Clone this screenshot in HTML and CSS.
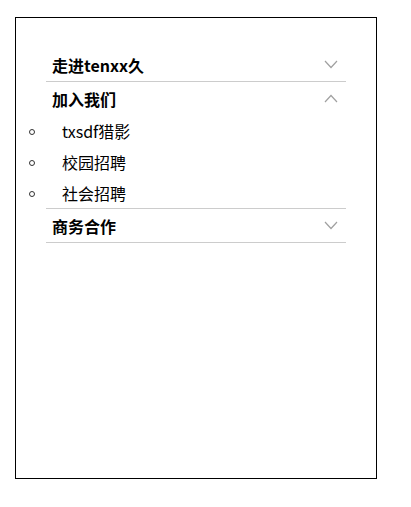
FILE: index.html
```html
<!DOCTYPE html>
<html lang="zh-CN">
<head>
    <meta charset="UTF-8">
    <meta name="viewport" content="width=device-width, initial-scale=1.0">
    <title>手风琴菜单</title>
    <link rel="stylesheet" href="styles.css">
</head>
<body>
    <!-- 外框 -->
    <div class="caja">
        <div class="menu">
            <!-- 第一项 -->
            <div class="seccion">
                <div class="titulo">
                    <span>走进tenxx久</span>
                    <svg class="flecha" width="14" height="9" viewBox="0 0 14 9"><polyline points="1,1 7,7.5 13,1" fill="none" stroke="#a0a0a0" stroke-width="1.2"/></svg>
                </div>
            </div>

            <!-- 第二项（展开） -->
            <div class="seccion">
                <div class="titulo">
                    <span>加入我们</span>
                    <svg class="flecha" width="14" height="9" viewBox="0 0 14 9"><polyline points="1,8 7,1.5 13,8" fill="none" stroke="#a0a0a0" stroke-width="1.2"/></svg>
                </div>
                <ul class="lista">
                    <li>txsdf猎影</li>
                    <li>校园招聘</li>
                    <li>社会招聘</li>
                </ul>
            </div>

            <!-- 第三项 -->
            <div class="seccion">
                <div class="titulo">
                    <span>商务合作</span>
                    <svg class="flecha" width="14" height="9" viewBox="0 0 14 9"><polyline points="1,1 7,7.5 13,1" fill="none" stroke="#a0a0a0" stroke-width="1.2"/></svg>
                </div>
            </div>
        </div>
    </div>
</body>
</html>
```

FILE: styles.css
```css
/* 基本样式 */
body {
    margin: 0;
    font-family: "Noto Sans CJK SC", "Noto Sans", sans-serif;
    font-size: 16px;
    color: #000;
    background-color: #fff;
}

/* 外框 */
.caja {
    width: 360px;
    height: 460px;
    margin: 17px 0 0 15px;
    border: 1px solid #000;
}

.menu {
    padding: 30px;
}

/* 每一项 */
.seccion {
    border-bottom: 1px solid #cccccc;
}

/* 标题行 */
.titulo {
    height: 33px;
    display: flex;
    justify-content: space-between;
    align-items: center;
    padding: 0 8px 0 6px;
    font-weight: bold;
    line-height: 1;
}

/* 展开的列表 */
.lista {
    list-style: none;
    margin: 0;
    padding: 0;
}

.lista li {
    height: 31px;
    display: flex;
    align-items: center;
    margin-left: -30px;
    padding-left: 13px;
    line-height: 1;
}

.lista li::before {
    content: "";
    width: 4px;
    height: 4px;
    border: 1px solid #333;
    border-radius: 50%;
    margin-right: 27px;
    margin-top: 2px;
}
```
